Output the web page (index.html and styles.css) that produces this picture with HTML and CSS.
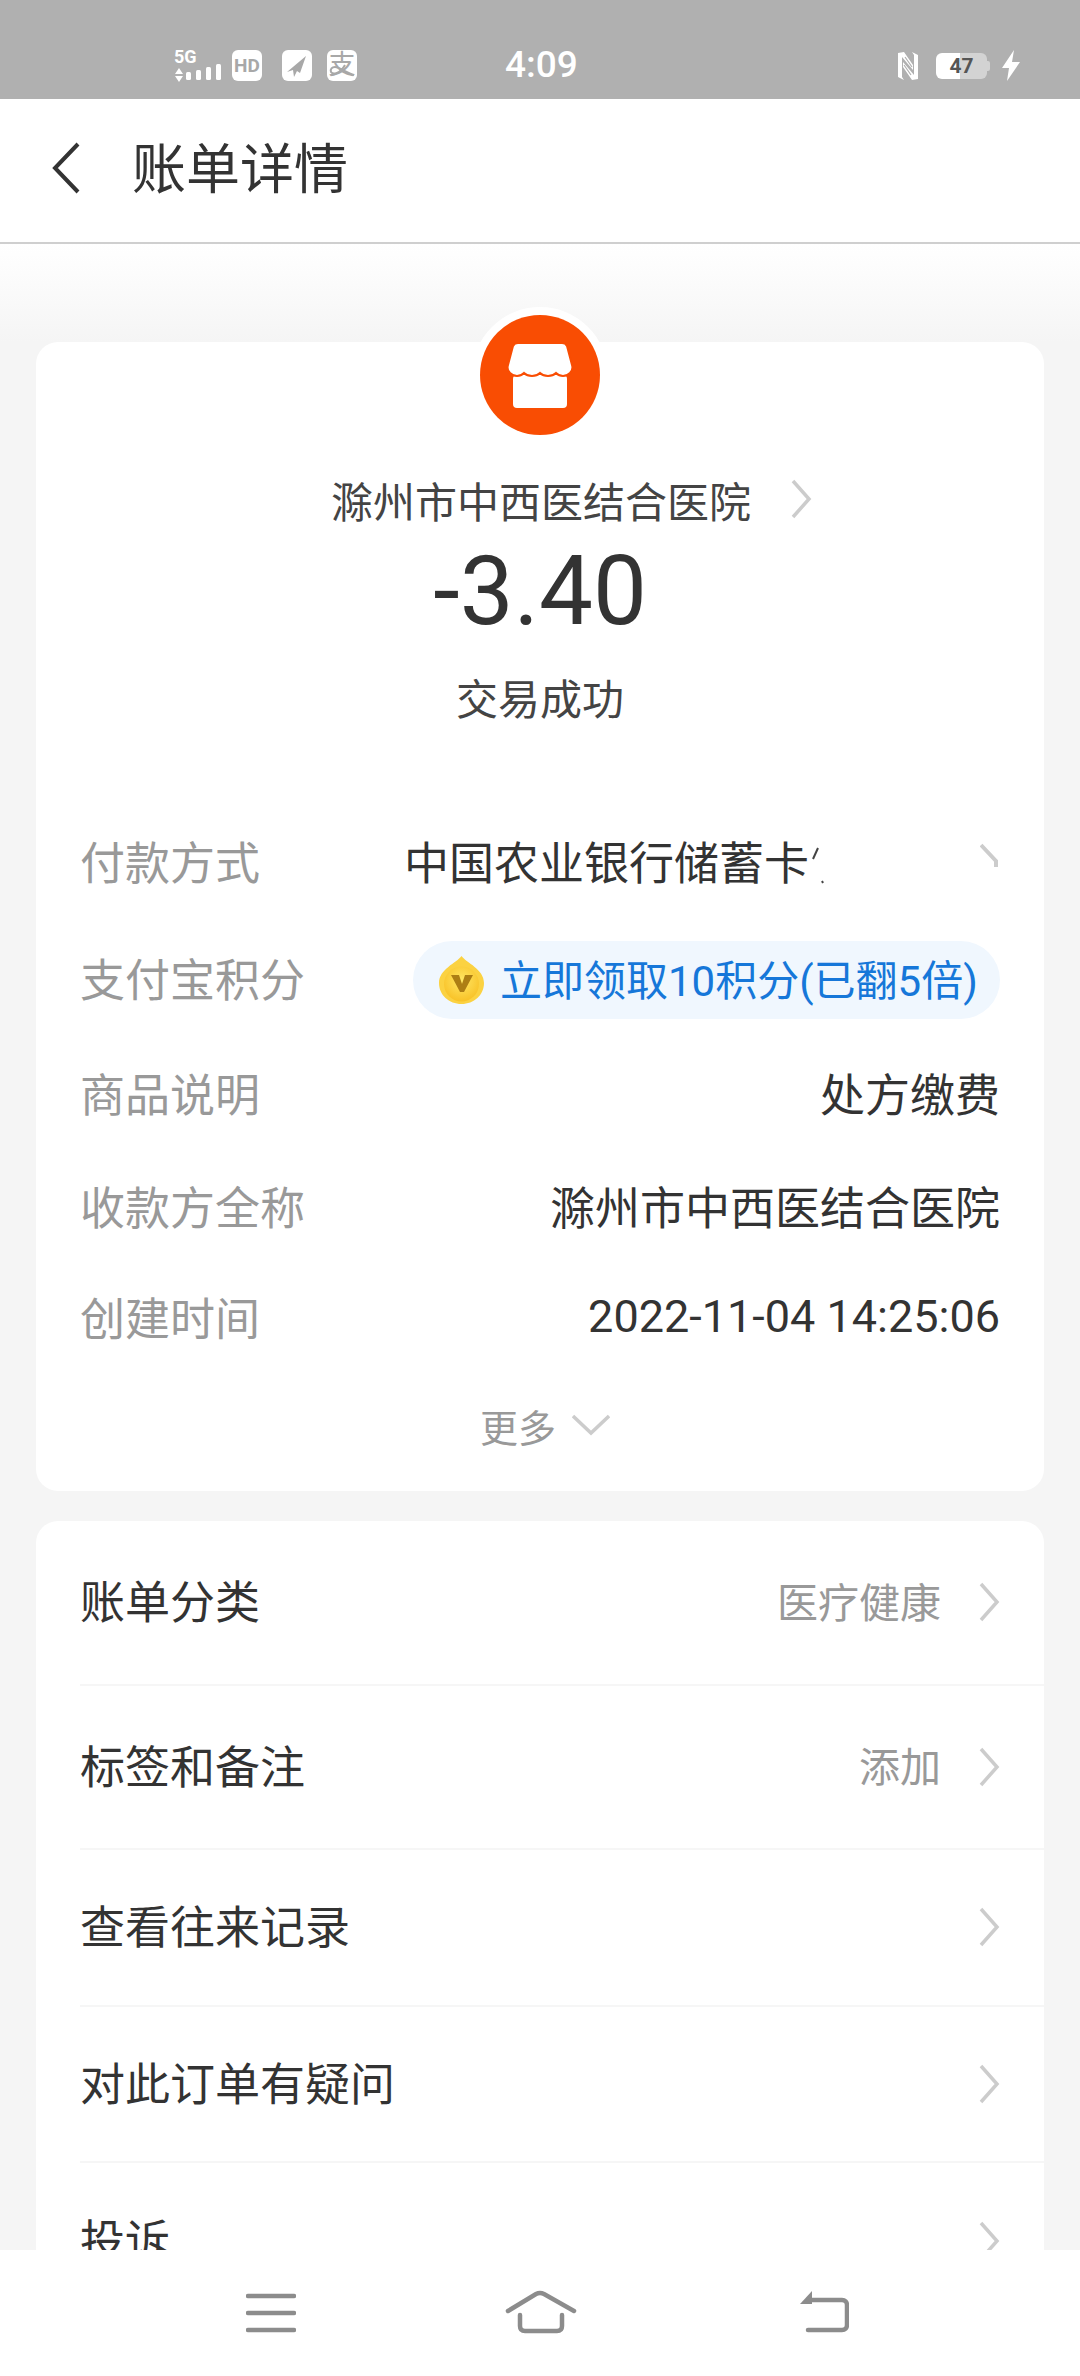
FILE: index.html
```html
<!DOCTYPE html>
<html lang="zh-CN">
<head>
    <meta charset="UTF-8">
    <meta name="viewport" content="width=device-width, initial-scale=1.0">
    <title>账单详情</title>
    <link rel="stylesheet" href="styles.css">
</head>
<body>
    <div class="screen">
        <div class="status-bar">
            <div class="status-left">
                <svg class="icon-signal" width="48" height="32" viewBox="0 0 48 32">
                    <text x="0" y="13" class="signal-text">5G</text>
                    <path d="M5 18l4 6H1zM5 32l4-6H1z" fill="#fff"/>
                    <rect x="12" y="22" width="5" height="8" rx="1.5" fill="#fff"/>
                    <rect x="22" y="20" width="5" height="10" rx="1.5" fill="#fff"/>
                    <rect x="32" y="17" width="5" height="13" rx="1.5" fill="#fff"/>
                    <rect x="42" y="14" width="5" height="16" rx="1.5" fill="#fff"/>
                </svg>
                <span class="status-chip chip-hd">HD</span>
                <span class="status-chip">
                    <svg width="30" height="30" viewBox="0 0 30 30"><path d="M24 5L5 21l6-2 1 7 3-6 3 2z" fill="#a8a8a8"/></svg>
                </span>
                <span class="status-chip chip-pay">支
                    <svg class="pay-swoosh" width="30" height="30" viewBox="0 0 30 30"><path d="M27 25C20 23 12 17 8 17c-3 0-5 2-4 5 2 3 9 2 14-7" fill="none" stroke="#a8a8a8" stroke-width="2"/></svg>
                </span>
            </div>
            <div class="status-time">4:09</div>
            <div class="status-right">
                <svg width="20" height="32" viewBox="0 0 20 32">
                    <path d="M0 3l6-1 9 13v5L4 7v20l2 3-6-3z" fill="#fff"/>
                    <path d="M20 29l-6 1-9-13v-5l11 13V5l-2-3 6 3z" fill="#fff"/>
                    <path d="M7 7l7 10M6 15l7 10" fill="none" stroke="#b0b0b0" stroke-width="1.200"/>
                </svg>
                <span class="battery"><span class="battery-num">47</span></span>
                <svg width="18" height="31" viewBox="0 0 18 31"><path d="M12 0L0 18h7L5 31l13-19h-8z" fill="#fff"/></svg>
            </div>
        </div>

        <header class="title-bar">
            <svg class="back-icon" width="32" height="54" viewBox="0 0 32 54"><path d="M28 3L5 27l23 24" fill="none" stroke="#333" stroke-width="4"/></svg>
            <h1>账单详情</h1>
        </header>

        <main class="content">
            <section class="card summary">
                <div class="logo-halo">
                    <svg width="120" height="120" viewBox="0 0 120 120">
                        <circle cx="60" cy="60" r="60" fill="#f94d03"/>
                        <rect x="33" y="60" width="54" height="33" rx="4" fill="#fff"/>
                        <path d="M38 28h44c2 0 4 1 5 3l5 19c1 3 0 6-2 8-4 4-10 4-14 0-4 4-12 4-16 0-4 4-12 4-16 0-4 4-10 4-14 0-2-2-3-5-2-8l5-19c1-2 3-3 5-3z" fill="#fff" stroke="#f94d03" stroke-width="2"/>
                    </svg>
                </div>
                <div class="merchant">
                    <span>滁州市中西医结合医院</span>
                    <svg width="22" height="40" viewBox="0 0 22 40"><path d="M3 2l16 18L3 38" fill="none" stroke="#ccc" stroke-width="3.5"/></svg>
                </div>
                <div class="amount">-3.40</div>
                <div class="trade-status">交易成功</div>

                <div class="detail-row row-pay">
                    <span class="detail-label">付款方式</span>
                    <span class="bank-name">中国农业银行储蓄卡</span>
                    <svg class="bank-sliver" width="12" height="48" viewBox="0 0 12 48"><path d="M6 9L1 20M10 42l1 2" fill="none" stroke="#444" stroke-width="2"/></svg>
                    <svg class="bank-chevron" width="20" height="26" viewBox="0 0 20 26"><path d="M1 2l15 16v6" fill="none" stroke="#ccc" stroke-width="4"/></svg>
                </div>
                <div class="detail-row row-points">
                    <span class="detail-label">支付宝积分</span>
                    <span class="points-pill">
                        <svg width="45" height="48" viewBox="0 0 45 48">
                            <defs>
                                <radialGradient id="coinFill" cx="50%" cy="40%" r="65%">
                                    <stop offset="0%" stop-color="#ffe765"/>
                                    <stop offset="100%" stop-color="#f8bf22"/>
                                </radialGradient>
                            </defs>
                            <path d="M22.5 0c5 7 22.5 13 22.5 27 0 12-10 21-22.5 21S0 39 0 27C0 13 17.500 7 22.500 0z" fill="#fbd242"/>
                            <circle cx="22.500" cy="28" r="17.500" fill="url(#coinFill)"/>
                            <path d="M12 19h8l3 9 3-9h8l-9 17h-4z" fill="#ad7e14"/>
                        </svg>
                        <span class="points-text">立即领取10积分(已翻5倍)</span>
                    </span>
                </div>
                <div class="detail-row row-goods">
                    <span class="detail-label">商品说明</span>
                    <span class="detail-value">处方缴费</span>
                </div>
                <div class="detail-row row-payee">
                    <span class="detail-label">收款方全称</span>
                    <span class="detail-value">滁州市中西医结合医院</span>
                </div>
                <div class="detail-row row-time">
                    <span class="detail-label">创建时间</span>
                    <span class="detail-value">2022-11-04 14:25:06</span>
                </div>
                <div class="more">
                    <span>更多</span>
                    <svg width="38" height="22" viewBox="0 0 38 22"><path d="M1 2l18 17L37 2" fill="none" stroke="#ccc" stroke-width="3.5"/></svg>
                </div>
            </section>

            <section class="card actions">
                <div class="action-row row-a">
                    <span>账单分类</span>
                    <span class="action-note">医疗健康</span>
                    <svg class="chevron" width="22" height="40" viewBox="0 0 22 40"><path d="M3 2l16 18L3 38" fill="none" stroke="#ccc" stroke-width="3.5"/></svg>
                </div>
                <div class="action-row row-a">
                    <span>标签和备注</span>
                    <span class="action-note">添加</span>
                    <svg class="chevron" width="22" height="40" viewBox="0 0 22 40"><path d="M3 2l16 18L3 38" fill="none" stroke="#ccc" stroke-width="3.5"/></svg>
                </div>
                <div class="action-row row-b">
                    <span>查看往来记录</span>
                    <svg class="chevron" width="22" height="40" viewBox="0 0 22 40"><path d="M3 2l16 18L3 38" fill="none" stroke="#ccc" stroke-width="3.5"/></svg>
                </div>
                <div class="action-row row-b">
                    <span>对此订单有疑问</span>
                    <svg class="chevron" width="22" height="40" viewBox="0 0 22 40"><path d="M3 2l16 18L3 38" fill="none" stroke="#ccc" stroke-width="3.5"/></svg>
                </div>
                <div class="action-row row-b">
                    <span>投诉</span>
                    <svg class="chevron" width="22" height="40" viewBox="0 0 22 40"><path d="M3 2l16 18L3 38" fill="none" stroke="#ccc" stroke-width="3.5"/></svg>
                </div>
            </section>
        </main>

        <nav class="nav-bar">
            <svg class="nav-menu" width="50" height="40" viewBox="0 0 50 40"><path d="M2 3h46M2 20h46M2 37h46" fill="none" stroke="#8c8c8c" stroke-width="4.500" stroke-linecap="round"/></svg>
            <svg class="nav-home" width="72" height="46" viewBox="0 0 72 46"><path d="M3 21L31 4q4-2 8 0l30 17M15 25v11q0 5 5 5h32q5 0 5-5V25" fill="none" stroke="#8c8c8c" stroke-width="4.500" stroke-linecap="round"/></svg>
            <svg class="nav-back" width="50" height="42" viewBox="0 0 50 42"><path d="M13 0v13H1z" fill="#8c8c8c"/><path d="M10 9h33c3 0 5 2 5 5v20c0 3-2 5-5 5H9" fill="none" stroke="#8c8c8c" stroke-width="4.500" stroke-linecap="round"/></svg>
        </nav>
    </div>
</body>
</html>
```
FILE: styles.css
```css
* {
    box-sizing: border-box;
}

body {
    margin: 0;
    font-family: Roboto, "Noto Sans CJK SC", sans-serif;
    color: #333;
}

.screen {
    width: 1080px;
    height: 2376px;
    display: flex;
    flex-direction: column;
    overflow: hidden;
    background: #f5f5f5;
}

/* status bar */
.status-bar {
    flex: none;
    height: 99px;
    background: #b0b0b0;
    padding: 50px 60px 0 174px;
    display: grid;
    grid-template-columns: 331px 70px 1fr;
    align-items: start;
}

.status-left {
    display: flex;
    align-items: flex-start;
    gap: 10px;
}

.icon-signal {
    display: block;
    overflow: visible;
}

.signal-text {
    font-size: 18px;
    font-weight: 700;
    fill: #fff;
}

.status-chip {
    width: 30px;
    height: 31px;
    border-radius: 6px;
    background: #fff;
    color: #a8a8a8;
    display: flex;
    align-items: center;
    justify-content: center;
    margin-left: 10px;
}

.icon-signal + .status-chip {
    margin-left: 0;
}

.chip-hd {
    font-size: 19px;
    font-weight: 700;
}

.chip-pay {
    margin-left: 5px;
    position: relative;
    font-size: 27px;
    line-height: 31px;
}

.pay-swoosh {
    position: absolute;
    left: 0;
    top: 0;
}

.status-time {
    color: #fff;
    font-size: 37px;
    font-weight: 500;
    line-height: 30px;
    text-align: center;
}

.status-right {
    display: flex;
    justify-content: flex-end;
    align-items: flex-start;
}

.battery {
    width: 51px;
    height: 26px;
    margin: 3px 15px 0 18px;
    border-radius: 6px;
    background: linear-gradient(90deg, #fff 0 47%, #d3d3d3 47%);
    position: relative;
    display: flex;
    align-items: center;
    justify-content: center;
}

.battery::after {
    content: "";
    position: absolute;
    right: -3px;
    top: 8px;
    width: 3px;
    height: 10px;
    border-radius: 0 2px 2px 0;
    background: #d3d3d3;
}

.battery-num {
    font-size: 21px;
    font-weight: 700;
    color: #555;
}

/* title bar */
.title-bar {
    flex: none;
    height: 145px;
    background: #fff;
    border-bottom: 2px solid #cfcfcf;
    padding-left: 50px;
    display: flex;
    align-items: center;
}

.back-icon {
    flex: none;
    margin-bottom: 6px;
}

.title-bar h1 {
    margin: 0 0 10px 50px;
    font-size: 54px;
    font-weight: 400;
    color: #333;
}

/* scroll area */
.content {
    flex: 1;
    min-height: 0;
    overflow: hidden;
    padding: 98px 36px 0;
    background: linear-gradient(#fff, #f5f5f5 98px);
}

.card {
    background: #fff;
    border-radius: 22px;
}

.summary {
    height: 1149px;
    margin-bottom: 30px;
}

.logo-halo {
    width: 136px;
    height: 136px;
    margin: 0 auto;
    position: relative;
    top: -35px;
    border-radius: 50%;
    background: #fff;
    display: flex;
    align-items: center;
    justify-content: center;
}

.merchant {
    height: 60px;
    margin-top: -9px;
    padding-left: 295px;
    display: flex;
    align-items: center;
    gap: 39px;
    font-size: 42px;
    color: #444;
    white-space: nowrap;
}

.amount {
    height: 110px;
    margin-top: 7px;
    font-size: 96px;
    line-height: 110px;
    text-align: center;
    color: #333;
}

.trade-status {
    height: 60px;
    margin-top: 25px;
    font-size: 42px;
    line-height: 60px;
    text-align: center;
    color: #444;
}

/* detail rows */
.detail-row {
    padding: 0 44px;
    display: flex;
    align-items: center;
    justify-content: space-between;
    font-size: 45px;
}

.row-pay {
    height: 118px;
    margin-top: 73px;
    justify-content: flex-start;
}

.row-points {
    height: 116px;
}

.row-goods {
    height: 114px;
}

.row-payee {
    height: 111px;
}

.row-time {
    height: 112px;
}

.detail-label,
.detail-value,
.bank-name,
.points-text {
    padding-bottom: 5px;
}

.detail-label {
    color: #999;
}

.detail-value {
    color: #333;
}

.bank-name {
    margin-left: 144px;
    color: #333;
    white-space: nowrap;
}

.bank-sliver {
    margin-left: 3px;
}

.bank-chevron {
    margin: -14px 0 0 auto;
}

.points-pill {
    width: 587px;
    height: 78px;
    padding-left: 26px;
    border-radius: 39px;
    background: #f0f7fe;
    color: #1677d9;
    font-size: 42px;
    display: flex;
    align-items: center;
    gap: 16px;
    white-space: nowrap;
}

.more {
    height: 100px;
    padding-left: 444px;
    display: flex;
    align-items: center;
    gap: 16px;
    font-size: 38px;
    color: #999;
}

/* action list */
.action-row {
    margin-left: 44px;
    padding-right: 44px;
    display: flex;
    align-items: center;
    border-bottom: 2px solid #f6f6f6;
    font-size: 45px;
    color: #333;
}

.action-row span {
    padding-bottom: 5px;
}

.row-a {
    height: 164.5px;
}

.row-b {
    height: 156.5px;
}

.action-row:last-child {
    border-bottom: none;
}

.action-note {
    margin-left: auto;
    font-size: 41px;
    color: #999;
}

.chevron {
    margin-left: auto;
}

.action-note + .chevron {
    margin-left: 37px;
}

/* bottom nav */
.nav-bar {
    flex: none;
    height: 126px;
    background: #fff;
    padding: 38px 0 0 246px;
    display: flex;
    align-items: flex-start;
}

.nav-menu {
    margin-top: 5px;
}

.nav-home {
    margin: 2px 0 0 209px;
}

.nav-back {
    margin: 3px 0 0 222px;
}
```
